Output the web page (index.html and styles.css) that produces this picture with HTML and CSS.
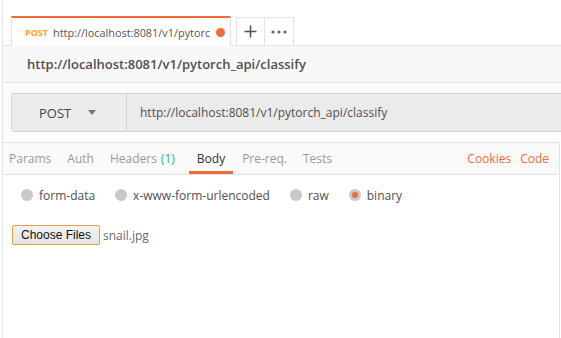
FILE: index.html
```html
<!DOCTYPE html>
<html lang="en">
<head>
    <meta charset="UTF-8">
    <title>Postman - classify</title>
    <link rel="stylesheet" href="styles.css">
</head>
<body>
    <div class="app">
        <div class="tab-strip">
            <div class="tab active">
                <span class="tab-method">POST</span>
                <span class="tab-url">http://localhost:8081/v1/pytorc</span>
                <span class="tab-dot"></span>
            </div>
            <div class="tab-btn">
                <svg width="13" height="13" viewBox="0 0 13 13"><path d="M6.5 0.5v12M0.5 6.5h12" stroke="#555" stroke-width="1.6" fill="none"/></svg>
            </div>
            <div class="tab-btn">
                <svg width="16" height="4" viewBox="0 0 16 4"><circle cx="2" cy="2" r="1.6" fill="#666"/><circle cx="8" cy="2" r="1.6" fill="#666"/><circle cx="14" cy="2" r="1.6" fill="#666"/></svg>
            </div>
        </div>

        <div class="title-bar">http://localhost:8081/v1/pytorch_api/classify</div>

        <div class="request">
            <div class="url-bar">
                <div class="method">
                    <span>POST</span>
                    <span class="caret"></span>
                </div>
                <div class="url">http://localhost:8081/v1/pytorch_api/classify</div>
            </div>
        </div>

        <div class="panel">
            <div class="req-tabs">
                <span class="req-tab">Params</span>
                <span class="req-tab">Auth</span>
                <span class="req-tab">Headers <em class="count">(1)</em></span>
                <span class="req-tab selected">Body</span>
                <span class="req-tab">Pre-req.</span>
                <span class="req-tab">Tests</span>
                <span class="spacer"></span>
                <span class="req-link">Cookies</span>
                <span class="req-link">Code</span>
            </div>

            <div class="body-types">
                <label class="radio"><span class="dot"></span>form-data</label>
                <label class="radio"><span class="dot"></span>x-www-form-urlencoded</label>
                <label class="radio"><span class="dot"></span>raw</label>
                <label class="radio"><span class="dot on"></span>binary</label>
            </div>

            <div class="file-row">
                <button class="choose">Choose Files</button>
                <span class="file-name">snail.jpg</span>
            </div>
        </div>
    </div>
</body>
</html>
```

FILE: styles.css
```css
body, html {
    margin: 0;
    padding: 0;
    height: 100%;
    overflow: hidden;
    background: #fff;
    font-family: 'Open Sans', 'Noto Sans', sans-serif;
    color: #505050;
}
.app {
    margin-left: 2px;
    height: 100%;
    border-left: 1px solid #e4e4e4;
    box-sizing: border-box;
}

/* top tabs */
.tab-strip {
    display: flex;
    align-items: flex-end;
    height: 45px;
    padding-left: 8px;
}
.tab {
    display: flex;
    align-items: center;
    box-sizing: border-box;
    width: 220px;
    height: 30px;
    padding: 0 5px 0 13px;
    background: #fff;
    border-top: 2px solid #f26b3a;
    border-left: 1px solid #e3e3e3;
    border-right: 1px solid #e3e3e3;
    margin-bottom: -1px;
    position: relative;
    z-index: 1;
}
.tab-method {
    font-size: 9px;
    font-weight: 700;
    color: #f5a623;
    margin-right: 5px;
    flex-shrink: 0;
}
.tab-url {
    font-size: 10.9px;
    white-space: nowrap;
    overflow: hidden;
    color: #555;
}
.tab-dot {
    flex-shrink: 0;
    width: 9px;
    height: 9px;
    border-radius: 50%;
    background: #f26b3a;
    margin-left: auto;
}
.tab-btn {
    display: flex;
    align-items: center;
    justify-content: center;
    box-sizing: border-box;
    width: 29px;
    height: 28px;
    border: 1px solid #e3e3e3;
    border-bottom: none;
    background: #fff;
}
.tab-strip .tab-btn:nth-child(2) {
    margin-left: 5px;
}
.tab-strip .tab-btn + .tab-btn {
    border-left: none;
}

/* request title */
.title-bar {
    height: 36px;
    line-height: 36px;
    background: #f8f8f8;
    border-top: 1px solid #e3e3e3;
    border-bottom: 1px solid #e3e3e3;
    padding-left: 24px;
    font-size: 13px;
    font-weight: 600;
    color: #505050;
}

/* url bar */
.request {
    padding: 10px 0 10px 8px;
    background: #fcfcfc;
}
.url-bar {
    display: flex;
    height: 39px;
    box-sizing: border-box;
    border: 1px solid #d4d4d4;
    border-right: none;
    border-radius: 3px 0 0 3px;
    background: #ebebeb;
}
.method {
    display: flex;
    align-items: center;
    width: 115px;
    padding-left: 27px;
    box-sizing: border-box;
    border-right: 1px solid #d4d4d4;
    background: #ececec;
    font-size: 13px;
    color: #444;
}
.caret {
    margin-left: 17px;
    width: 0;
    height: 0;
    border-left: 4px solid transparent;
    border-right: 4px solid transparent;
    border-top: 5px solid #777;
}
.url {
    display: flex;
    align-items: center;
    padding-left: 13px;
    font-size: 12px;
    color: #505050;
}

/* body panel */
.panel {
    width: 557px;
    box-sizing: border-box;
    border-right: 1px solid #e3e3e3;
    height: 200px;
}
.req-tabs {
    display: flex;
    align-items: center;
    height: 33px;
    box-sizing: border-box;
    background: #fafafa;
    border-top: 1px solid #e3e3e3;
    border-bottom: 1px solid #e3e3e3;
    padding: 0 10px 0 6px;
    font-size: 12px;
}
.req-tab {
    color: #9a9a9a;
    margin-right: 16px;
    height: 100%;
    display: flex;
    align-items: center;
    box-sizing: border-box;
}
.req-tab.selected {
    color: #333;
    border-bottom: 3px solid #f26b3a;
    padding: 3px 8px 0;
    margin: 0 9px 0 -2px;
}
.count {
    font-style: normal;
    color: #26b47f;
    margin-left: 4px;
}
.spacer {
    flex: 1;
}
.req-link {
    color: #f26b3a;
    margin-left: 9px;
}

.body-types {
    display: flex;
    align-items: center;
    height: 40px;
    padding-left: 18px;
    font-size: 12px;
    color: #505050;
}
.radio {
    display: flex;
    align-items: center;
    margin-right: 20px;
}
.dot {
    width: 12px;
    height: 12px;
    border-radius: 50%;
    background: #c9c9c9;
    margin-right: 6px;
    display: flex;
    align-items: center;
    justify-content: center;
}
.dot.on::after {
    content: "";
    width: 6px;
    height: 6px;
    border-radius: 50%;
    background: #f26b3a;
}

.file-row {
    display: flex;
    align-items: center;
    padding: 10px 0 0 9px;
}
.choose {
    height: 20px;
    padding: 0 8px;
    font-family: 'Liberation Sans', Arial, sans-serif;
    font-size: 12px;
    color: #111;
    background: linear-gradient(#f3f3f3, #e4e4e4);
    border: 1px solid #dca24a;
    border-radius: 2px;
}
.file-name {
    margin-left: 3px;
    font-size: 12px;
    color: #6a6a6a;
}
```
